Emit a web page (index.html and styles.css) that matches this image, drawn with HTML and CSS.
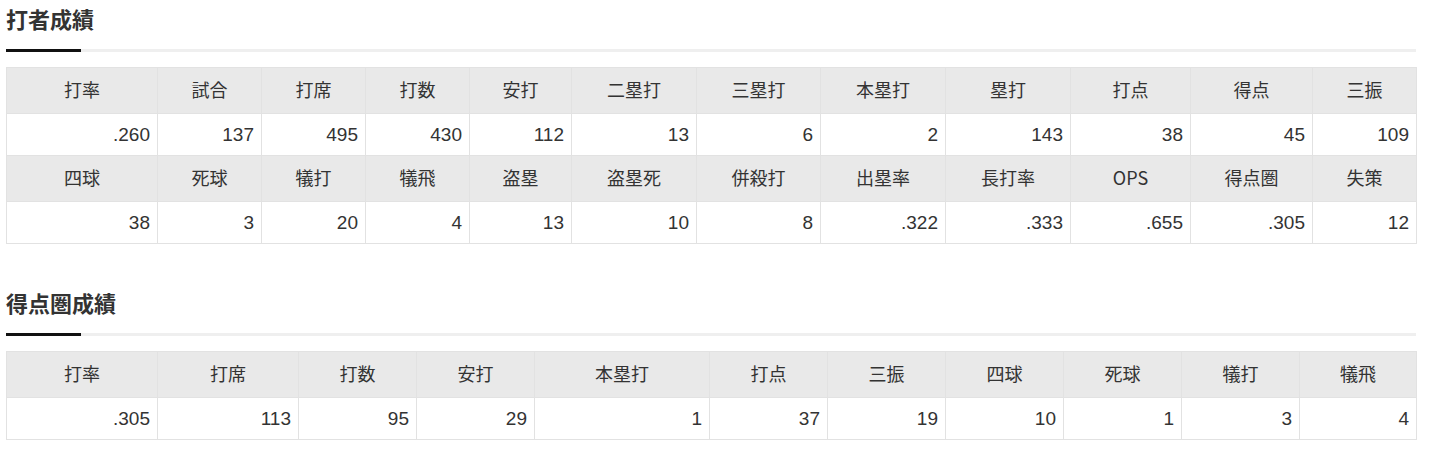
FILE: index.html
```html
<!DOCTYPE html>
<html lang="ja">
<head>
<meta charset="utf-8">
<title>成績</title>
<link rel="stylesheet" href="styles.css">
</head>
<body>
<div class="page">
  <section class="section">
    <h2 class="title">打者成績</h2>
    <div class="rule"><span class="rule-accent"></span></div>
    <table class="stats">
      <colgroup>
        <col class="w151"><col class="w104"><col class="w104"><col class="w104"><col class="w102"><col class="w125"><col class="w124"><col class="w125"><col class="w125"><col class="w120"><col class="w122"><col class="w104">
      </colgroup>
      <tr class="head"><th>打率</th><th>試合</th><th>打席</th><th>打数</th><th>安打</th><th>二塁打</th><th>三塁打</th><th>本塁打</th><th>塁打</th><th>打点</th><th>得点</th><th>三振</th></tr>
      <tr class="data"><td>.260</td><td>137</td><td>495</td><td>430</td><td>112</td><td>13</td><td>6</td><td>2</td><td>143</td><td>38</td><td>45</td><td>109</td></tr>
      <tr class="head"><th>四球</th><th>死球</th><th>犠打</th><th>犠飛</th><th>盗塁</th><th>盗塁死</th><th>併殺打</th><th>出塁率</th><th>長打率</th><th>OPS</th><th>得点圏</th><th>失策</th></tr>
      <tr class="data"><td>38</td><td>3</td><td>20</td><td>4</td><td>13</td><td>10</td><td>8</td><td>.322</td><td>.333</td><td>.655</td><td>.305</td><td>12</td></tr>
    </table>
  </section>
  <section class="section second">
    <h2 class="title">得点圏成績</h2>
    <div class="rule"><span class="rule-accent"></span></div>
    <table class="stats">
      <colgroup>
        <col class="w151"><col class="w141"><col class="w118"><col class="w118"><col class="w175"><col class="w118"><col class="w118"><col class="w118"><col class="w118"><col class="w118"><col class="w117">
      </colgroup>
      <tr class="head"><th>打率</th><th>打席</th><th>打数</th><th>安打</th><th>本塁打</th><th>打点</th><th>三振</th><th>四球</th><th>死球</th><th>犠打</th><th>犠飛</th></tr>
      <tr class="data"><td>.305</td><td>113</td><td>95</td><td>29</td><td>1</td><td>37</td><td>19</td><td>10</td><td>1</td><td>3</td><td>4</td></tr>
    </table>
  </section>
</div>
</body>
</html>
```
FILE: styles.css
```css
html, body {
  margin: 0;
  padding: 0;
  background: #fff;
}
body {
  font-family: "Liberation Sans", "Noto Sans CJK JP", sans-serif;
  color: #333;
}
.page {
  width: 1410px;
  margin-left: 6px;
  padding-top: 3px;
}
.section.second {
  margin-top: 43px;
}
.title {
  margin: 0;
  font-family: "Noto Sans CJK JP", sans-serif;
  font-size: 22px;
  font-weight: 700;
  line-height: 30px;
  color: #333;
}
.rule {
  margin-top: 16px;
  height: 3px;
  background: #efefef;
  display: flex;
}
.rule-accent {
  width: 75px;
  height: 3px;
  background: #111;
}
.stats {
  margin-top: 15px;
  width: 1410px;
  border-collapse: collapse;
  table-layout: fixed;
}
.stats th, .stats td {
  border: 1px solid #e2e2e2;
  padding: 0 7px;
}
.head th {
  height: 42px;
  padding-bottom: 3px;
  background: #e9e9e9;
  font-family: "Noto Sans CJK JP", sans-serif;
  font-weight: 400;
  font-size: 18px;
  line-height: 24px;
  color: #333;
  text-align: center;
  vertical-align: middle;
}
.data td {
  height: 41px;
  font-size: 19px;
  color: #333;
  text-align: right;
  vertical-align: middle;
}
.w151 { width: 151px; }
.w104 { width: 104px; }
.w102 { width: 102px; }
.w125 { width: 125px; }
.w124 { width: 124px; }
.w120 { width: 120px; }
.w122 { width: 122px; }
.w141 { width: 141px; }
.w118 { width: 118px; }
.w175 { width: 175px; }
.w117 { width: 117px; }
```
